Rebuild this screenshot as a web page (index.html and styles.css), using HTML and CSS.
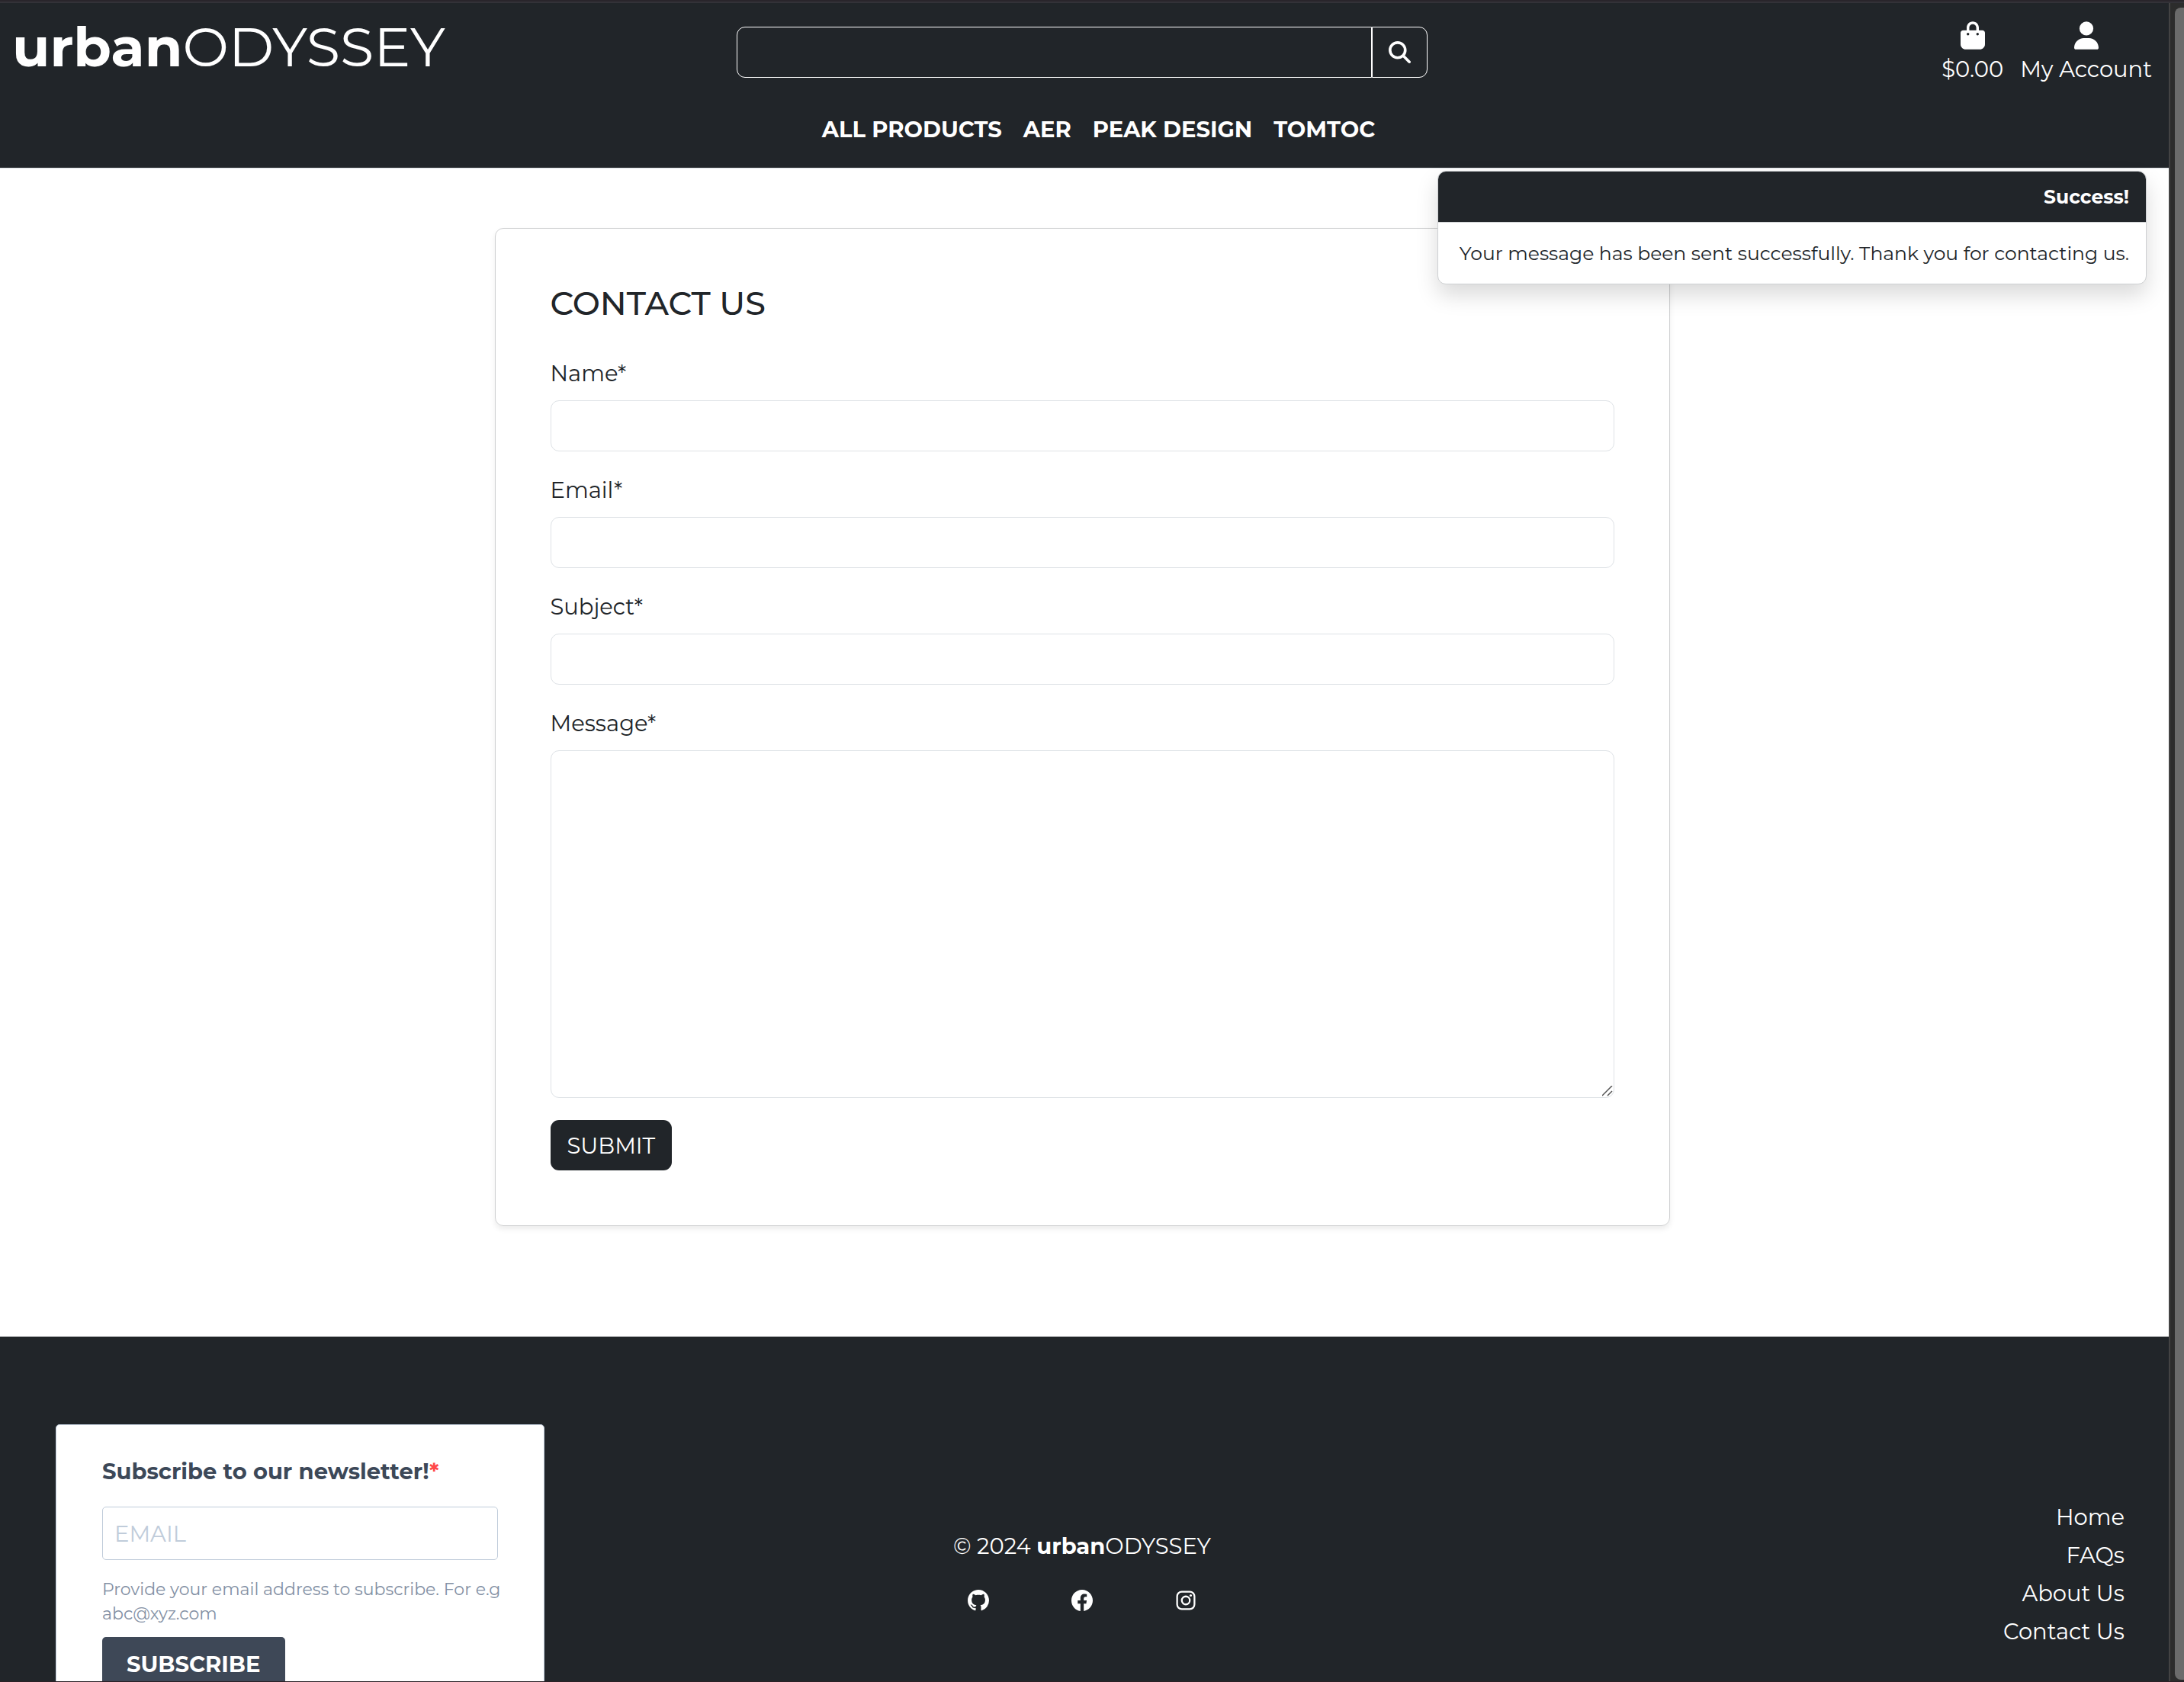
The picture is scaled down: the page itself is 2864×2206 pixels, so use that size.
FILE: index.html
```html
<!DOCTYPE html>
<html lang="en">
<head>
<meta charset="utf-8">
<title>urbanODYSSEY - Contact Us</title>
<link rel="stylesheet" href="styles.css">
</head>
<body>
<div class="window">
  <div class="page">
    <header class="header">
      <div class="header-top">
        <a class="brand" href="#"><strong>urban</strong>ODYSSEY</a>
        <form class="search" role="search">
          <input class="search-input" type="text" aria-label="Search">
          <button class="search-button" type="button" aria-label="Search">
            <svg class="search-icon" viewBox="0 0 512 512" fill="currentColor"><path d="M416 208c0 45.900-14.900 88.300-40 122.700L502.600 457.400c12.500 12.500 12.500 32.800 0 45.300s-32.800 12.500-45.300 0L330.700 376c-34.400 25.200-76.800 40-122.700 40C93.100 416 0 322.900 0 208S93.100 0 208 0S416 93.100 416 208zM208 352a144 144 0 1 0 0-288 144 144 0 1 0 0 288z"/></svg>
          </button>
        </form>
        <div class="account">
          <a class="account-link" href="#">
            <svg class="account-icon" viewBox="0 0 448 512" fill="currentColor"><path d="M160 112c0-35.300 28.700-64 64-64s64 28.700 64 64v48H160V112zm-48 48H48c-26.500 0-48 21.500-48 48V416c0 53 43 96 96 96H352c53 0 96-43 96-96V208c0-26.500-21.500-48-48-48H336V112C336 50.100 285.900 0 224 0S112 50.100 112 112v48zm24 48a24 24 0 1 1 0 48 24 24 0 1 1 0-48zm152 24a24 24 0 1 1 48 0 24 24 0 1 1-48 0z"/></svg>
            <span>$0.00</span>
          </a>
          <a class="account-link" href="#">
            <svg class="account-icon" viewBox="0 0 448 512" fill="currentColor"><path d="M224 256A128 128 0 1 0 224 0a128 128 0 1 0 0 256zm-45.700 48C79.800 304 0 383.800 0 482.300C0 498.700 13.300 512 29.700 512H418.300c16.400 0 29.700-13.300 29.700-29.700C448 383.800 368.200 304 269.700 304H178.300z"/></svg>
            <span>My Account</span>
          </a>
        </div>
      </div>
      <nav class="nav">
        <a href="#">ALL PRODUCTS</a>
        <a href="#">AER</a>
        <a href="#">PEAK DESIGN</a>
        <a href="#">TOMTOC</a>
      </nav>
      <div class="toast" role="status">
        <div class="toast-header">Success!</div>
        <div class="toast-body">Your message has been sent successfully. Thank you for contacting us.</div>
      </div>
    </header>

    <main class="main">
      <form class="contact">
        <h1 class="contact-title">CONTACT US</h1>
        <div class="field">
          <label for="name">Name*</label>
          <input class="control" id="name" type="text">
        </div>
        <div class="field">
          <label for="email">Email*</label>
          <input class="control" id="email" type="email">
        </div>
        <div class="field">
          <label for="subject">Subject*</label>
          <input class="control" id="subject" type="text">
        </div>
        <div class="field">
          <label for="message">Message*</label>
          <textarea class="control control-area" id="message"></textarea>
        </div>
        <button class="submit" type="button">SUBMIT</button>
      </form>
    </main>

    <footer class="footer">
      <form class="newsletter">
        <label class="newsletter-title" for="newsletter-email">Subscribe to our newsletter!<span class="required">*</span></label>
        <input class="newsletter-input" id="newsletter-email" type="email" placeholder="EMAIL">
        <p class="newsletter-help">Provide your email address to subscribe. For e.g abc@xyz.com</p>
        <button class="newsletter-button" type="button">SUBSCRIBE</button>
      </form>
      <div class="footer-center">
        <p class="copyright">© 2024 <strong>urban</strong>ODYSSEY</p>
        <div class="social">
          <a href="#" aria-label="GitHub"><svg class="social-icon" viewBox="0 0 16 16" fill="currentColor"><path d="M8 0C3.580 0 0 3.580 0 8c0 3.540 2.290 6.530 5.470 7.590.4.070.55-.17.55-.38 0-.19-.01-.82-.01-1.490-2.010.37-2.530-.49-2.690-.94-.09-.23-.48-.94-.82-1.130-.28-.15-.68-.52-.01-.53.63-.01 1.080.58 1.230.82.72 1.210 1.870.87 2.330.66.07-.52.28-.87.51-1.070-1.780-.2-3.640-.89-3.640-3.950 0-.87.31-1.590.82-2.150-.08-.2-.36-1.020.08-2.120 0 0 .67-.21 2.200.82.64-.18 1.320-.27 2-.27s1.360.09 2 .27c1.530-1.040 2.200-.82 2.200-.82.44 1.100.16 1.920.08 2.120.51.56.82 1.270.82 2.150 0 3.070-1.870 3.750-3.650 3.950.29.25.54.73.54 1.480 0 1.070-.01 1.930-.01 2.200 0 .21.15.46.55.38A8.010 8.010 0 0 0 16 8c0-4.420-3.580-8-8-8z"/></svg></a>
          <a href="#" aria-label="Facebook"><svg class="social-icon" viewBox="0 0 16 16" fill="currentColor"><path d="M16 8.049c0-4.446-3.582-8.050-8-8.050C3.580 0-.002 3.603-.002 8.050c0 4.017 2.926 7.347 6.750 7.951v-5.625h-2.030V8.050H6.750V6.275c0-2.017 1.195-3.131 3.022-3.131.876 0 1.791.157 1.791.157v1.980h-1.009c-.993 0-1.303.621-1.303 1.258v1.510h2.218l-.354 2.326H9.250V16c3.824-.604 6.750-3.934 6.750-7.951z"/></svg></a>
          <a href="#" aria-label="Instagram"><svg class="social-icon" viewBox="0 0 16 16" fill="none" stroke="currentColor" stroke-width="1.300"><rect x="1.500" y="1.500" width="13" height="13" rx="3.500"/><circle cx="8" cy="8" r="3"/><circle cx="11.700" cy="4.300" r=".9" fill="currentColor" stroke="none"/></svg></a>
        </div>
      </div>
      <nav class="footer-links">
        <a href="#">Home</a>
        <a href="#">FAQs</a>
        <a href="#">About Us</a>
        <a href="#">Contact Us</a>
      </nav>
    </footer>
  </div>
  <div class="scrollbar"><div class="scrollbar-thumb"></div></div>
</div>
</body>
</html>
```
FILE: styles.css
```css
* {
  box-sizing: border-box;
}

body {
  margin: 0;
  font-family: Montserrat, Inter, "Liberation Sans", sans-serif;
  font-size: 29px;
  line-height: 43px;
  color: #212529;
  background: #fff;
}

a {
  color: inherit;
  text-decoration: none;
}

p {
  margin: 0;
}

input,
textarea,
button {
  font: inherit;
}

svg {
  display: block;
}

.window {
  display: grid;
  grid-template-columns: minmax(0, 1fr) 20px;
  height: 100vh;
  overflow: hidden;
  border-top: 2px solid #29252b;
  border-bottom: 1px solid #2a2026;
  box-shadow: inset 0 2px #333238;
}

.page {
  margin-top: 2px;
  overflow: hidden;
}

.scrollbar {
  margin-top: 2px;
  padding: 6px 0 2px 6px;
  border-left: 2px solid #434343;
  background: #2c2c2c;
}

.scrollbar-thumb {
  height: 100%;
  border-radius: 8px 0 0 8px;
  background: #6b6b6b;
}

/* Header */
.header {
  position: relative;
  padding-bottom: 29px;
  border-bottom: 1px solid #dee2e6;
  color: #fff;
  background: #212529;
}

.header-top {
  display: grid;
  grid-template-columns: 1fr 906px 1fr;
  align-items: start;
  height: 144px;
  padding: 14px 22px 0 16px;
}

.brand {
  font-size: 72px;
  line-height: 86px;
}

.search {
  display: flex;
  height: 67px;
  margin-top: 17px;
}

.search-input {
  flex: 1;
  min-width: 0;
  padding: 10px 22px;
  border: 1px solid #fff;
  border-radius: 11px 0 0 11px;
  color: #fff;
  background: transparent;
}

.search-button {
  display: grid;
  place-items: center;
  width: 73px;
  padding: 0;
  border: 1px solid #fff;
  border-radius: 0 11px 11px 0;
  color: #fff;
  background: transparent;
}

.search-icon {
  width: 29px;
  height: 29px;
}

.account {
  display: flex;
  justify-content: flex-end;
  gap: 22px;
  padding-top: 10px;
}

.account-link {
  display: flex;
  flex-direction: column;
  align-items: center;
  gap: 4px;
}

.account-icon {
  width: 32px;
  height: 37px;
}

.nav {
  display: flex;
  justify-content: center;
  gap: 28px;
  padding-left: 37px;
  font-weight: 700;
}

/* Notification */
.toast {
  position: absolute;
  top: 220px;
  right: 29px;
  min-width: 930px;
  border: 1px solid #ced0d2;
  border-radius: 11px;
  overflow: hidden;
  font-size: 25px;
  line-height: 38px;
  text-align: right;
  white-space: nowrap;
  color: #212529;
  background: #fff;
  box-shadow: 0 14px 29px rgba(0, 0, 0, .15);
}

.toast-header {
  padding: 14px 22px;
  border-bottom: 1px solid #ced0d2;
  font-weight: 700;
  color: #fff;
  background: #212529;
}

.toast-body {
  padding: 21px 22px;
}

/* Contact form */
.main {
  padding: 78px 28px 145px 22px;
}

.contact {
  max-width: 1541px;
  margin: 0 auto;
  padding: 72px;
  border: 1px solid #cfd0d1;
  border-radius: 11px;
  box-shadow: 0 4px 7px rgba(0, 0, 0, .08);
}

.contact-title {
  margin: 0 0 44px;
  font-size: 43px;
  line-height: 52px;
  font-weight: 500;
}

.field {
  display: flex;
  flex-direction: column;
  gap: 14px;
  margin-bottom: 29px;
}

.control {
  height: 67px;
  padding: 10px 22px;
  border: 1px solid #dee2e6;
  border-radius: 11px;
  background: #fff;
}

.control-area {
  height: 456px;
  resize: vertical;
}

.control-area::-webkit-resizer {
  background: url("data:image/svg+xml,%3Csvg xmlns='http://www.w3.org/2000/svg' width='15' height='15'%3E%3Cpath d='M0 13L13 0M7 13L13 7' stroke='%23555' stroke-width='1.5'/%3E%3C/svg%3E") no-repeat;
}

.submit {
  height: 66px;
  padding: 0 22px;
  border: 0;
  border-radius: 11px;
  color: #fff;
  background: #212529;
}

/* Footer */
.footer {
  display: grid;
  grid-template-columns: 1fr auto 1fr;
  align-items: center;
  padding: 115px 58px 115px 52px;
  color: #fff;
  background: #212529;
}

.newsletter {
  display: flex;
  flex-direction: column;
  align-items: flex-start;
  width: 641px;
  margin-left: 21px;
  padding: 39px 60px 42px;
  border: 1px solid #c0ccda;
  border-radius: 5px;
  background: #fff;
}

.newsletter-title {
  margin-bottom: 25px;
  font-weight: 700;
  color: #3c4858;
}

.required {
  color: #ff4949;
}

.newsletter-input {
  width: 100%;
  height: 70px;
  padding: 0 15px;
  border: 1px solid #c0ccda;
  border-radius: 5px;
  background: #fff;
}

.newsletter-input::placeholder {
  color: #c0ccda;
}

.newsletter-help {
  margin: 23px -12px 14px 0;
  font-size: 22px;
  line-height: 32px;
  color: #8390a4;
}

.newsletter-button {
  height: 71px;
  padding: 0 32px;
  border: 0;
  border-radius: 5px;
  font-weight: 700;
  color: #fff;
  background: #3e4857;
}

.footer-center {
  display: grid;
  gap: 36px;
  padding-bottom: 10px;
}

.social {
  display: flex;
  justify-content: center;
  gap: 108px;
}

.social-icon {
  width: 28px;
  height: 28px;
}

.footer-links {
  display: flex;
  flex-direction: column;
  align-items: flex-end;
  gap: 7px;
}
```
